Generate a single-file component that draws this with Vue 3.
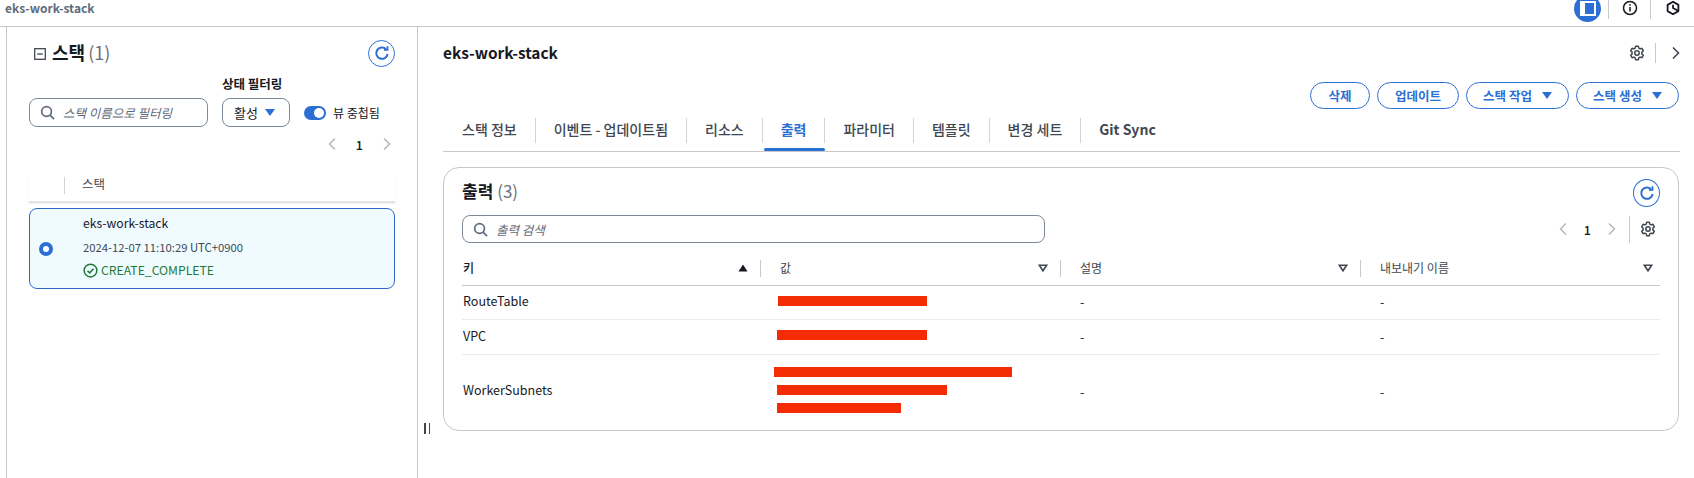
<script setup>
const tabs = ['스택 정보', '이벤트 - 업데이트됨', '리소스', '출력', '파라미터', '템플릿', '변경 세트', 'Git Sync']
const heads = [
  { name: '키', sort: 'up' },
  { name: '값', sort: 'down' },
  { name: '설명', sort: 'down' },
  { name: '내보내기 이름', sort: 'down' }
]
const rows = [
  { key: 'RouteTable', cls: 'short', bars: [{ w: 149, m: 18 }] },
  { key: 'VPC', cls: 'short2', bars: [{ w: 150, m: 17 }] },
  { key: 'WorkerSubnets', cls: 'tall', bars: [{ w: 238, m: 14 }, { w: 170, m: 17 }, { w: 124, m: 17 }] }
]
const gear = 'M6.6 1.3h2.8l.4 1.9 1.3.7 1.8-.6 1.4 2.4-1.4 1.4v1.8l1.4 1.4-1.4 2.4-1.8-.6-1.3.7-.4 1.9H6.6l-.4-1.9-1.3-.7-1.8.6-1.4-2.4 1.4-1.4V7.100L1.700 5.700l1.400-2.400 1.800.6 1.300-.7z'
</script>

<template>
  <div class="page">
    <header class="topbar">
      <span class="crumb">eks-work-stack</span>
      <div class="top-icons">
        <span class="panel-btn">
          <svg width="16" height="15" viewBox="0 0 16 15" fill="none"><rect x="1" y="1" width="14" height="13" stroke="#fff" stroke-width="2"/><rect x="2" y="2" width="3" height="11" fill="#fff"/></svg>
        </span>
        <span class="top-sep"></span>
        <span class="top-icon">
          <svg width="16" height="16" viewBox="0 0 16 16" fill="none" stroke="#16191f" stroke-width="1.5"><circle cx="8" cy="8" r="6.500"/><path d="M8 7v4.500"/><path d="M8 4.200v1.600" stroke-width="1.600"/></svg>
        </span>
        <span class="top-sep"></span>
        <span class="top-icon">
          <svg width="16" height="16" viewBox="0 0 16 16" fill="none" stroke="#16191f" stroke-width="1.800" stroke-linejoin="round"><path d="M8 1.800l5.400 3.100v6.200L8 14.200l-5.400-3.100V4.900z"/><path d="M8 4.800V8l5 2.800"/></svg>
        </span>
      </div>
    </header>

    <div class="main">
      <aside class="left">
        <div class="left-head">
          <div class="left-title">
            <svg width="12" height="12" viewBox="0 0 12 12" fill="none" stroke="#414750" stroke-width="1.3"><rect x=".7" y=".7" width="10.600" height="10.600"/><path d="M3.200 6h5.600"/></svg>
            <h2>스택<span class="count">(1)</span></h2>
          </div>
          <button class="refresh">
            <svg width="16" height="16" viewBox="0 0 16 16" fill="none" stroke="#2b6fd4" stroke-width="2"><path d="M13.600 9a5.700 5.700 0 1 1-1.700-5"/><path d="M13.500 1.200v3.600H9.900" stroke-width="1.800"/></svg>
          </button>
        </div>

        <div class="filters">
          <div class="search stack-search">
            <svg width="15" height="15" viewBox="0 0 16 16" fill="none" stroke="#5f6b7a" stroke-width="1.800"><circle cx="7" cy="7" r="5.200"/><path d="M11 11l4 4"/></svg>
            <span class="ph">스택 이름으로 필터링</span>
          </div>
          <div class="select-col">
            <label class="field-label">상태 필터링</label>
            <div class="select">
              <span>활성</span>
              <i class="caret"></i>
            </div>
          </div>
          <div class="toggle-wrap">
            <span class="toggle"><i></i></span>
            <span class="toggle-label">뷰 중첩됨</span>
          </div>
        </div>

        <div class="pager left-pager">
          <svg width="10" height="14" viewBox="0 0 10 14" fill="none" stroke="#b4b8bd" stroke-width="1.500"><path d="M8 1.500L2.500 7 8 12.500"/></svg>
          <span>1</span>
          <svg width="10" height="14" viewBox="0 0 10 14" fill="none" stroke="#b4b8bd" stroke-width="1.500"><path d="M2 1.500L7.500 7 2 12.500"/></svg>
        </div>

        <div class="list-head"><span class="list-head-cell">스택</span></div>

        <div class="stack-card">
          <span class="radio"></span>
          <div class="stack-info">
            <div class="stack-name">eks-work-stack</div>
            <div class="stack-date">2024-12-07 11:10:29 UTC+0900</div>
            <div class="stack-status">
              <svg width="15" height="15" viewBox="0 0 16 16" fill="none" stroke="#1f7a35" stroke-width="1.600"><circle cx="8" cy="8" r="6.800"/><path d="M4.800 8.200l2.300 2.300 4.200-4.400"/></svg>
              CREATE_COMPLETE
            </div>
          </div>
        </div>
      </aside>

      <section class="right">
        <span class="handle"><i></i><i></i></span>
        <div class="right-head">
          <h1>eks-work-stack</h1>
          <div class="right-tools">
            <svg width="16" height="16" viewBox="0 0 16 16" fill="none" stroke="#414750" stroke-width="1.500" stroke-linejoin="round"><path :d="gear"/><circle cx="8" cy="8" r="2.200"/></svg>
            <span class="tool-sep"></span>
            <svg width="10" height="14" viewBox="0 0 10 14" fill="none" stroke="#414750" stroke-width="1.600"><path d="M2 1.500L7.500 7 2 12.500"/></svg>
          </div>
        </div>

        <div class="actions">
          <button class="btn w-del">삭제</button>
          <button class="btn w-upd">업데이트</button>
          <button class="btn w-act">스택 작업 <i class="caret"></i></button>
          <button class="btn w-act">스택 생성 <i class="caret"></i></button>
        </div>

        <nav class="tabs">
          <div v-for="(t, i) in tabs" :key="t" class="tab" :class="{ active: t === '출력', last: i === tabs.length - 1 }">
            <span class="tab-label">{{ t }}</span>
            <span class="tab-bar"></span>
          </div>
        </nav>

        <div class="outputs">
          <div class="out-head">
            <h2>출력 <span class="count">(3)</span></h2>
            <button class="refresh refresh-big">
              <svg width="16" height="16" viewBox="0 0 16 16" fill="none" stroke="#2b6fd4" stroke-width="2"><path d="M13.600 9a5.700 5.700 0 1 1-1.700-5"/><path d="M13.500 1.200v3.600H9.900" stroke-width="1.800"/></svg>
            </button>
          </div>

          <div class="out-tools">
            <div class="search out-search">
              <svg width="15" height="15" viewBox="0 0 16 16" fill="none" stroke="#5f6b7a" stroke-width="1.800"><circle cx="7" cy="7" r="5.200"/><path d="M11 11l4 4"/></svg>
              <span class="ph">출력 검색</span>
            </div>
            <div class="out-right">
              <div class="pager">
                <svg width="10" height="14" viewBox="0 0 10 14" fill="none" stroke="#b4b8bd" stroke-width="1.500"><path d="M8 1.500L2.500 7 8 12.500"/></svg>
                <span>1</span>
                <svg width="10" height="14" viewBox="0 0 10 14" fill="none" stroke="#b4b8bd" stroke-width="1.500"><path d="M2 1.500L7.500 7 2 12.500"/></svg>
              </div>
              <span class="tool-sep tall-sep"></span>
              <svg class="out-gear" width="16" height="16" viewBox="0 0 16 16" fill="none" stroke="#414750" stroke-width="1.500" stroke-linejoin="round"><path :d="gear"/><circle cx="8" cy="8" r="2.200"/></svg>
            </div>
          </div>

          <div class="t-row t-head">
            <div v-for="(h, i) in heads" :key="h.name" class="th" :class="'th' + i">
              <span class="th-text">{{ h.name }}</span>
              <svg width="10" height="8" viewBox="0 0 10 8">
                <path v-if="h.sort === 'up'" d="M5 .5L9.500 7.500H.5z" fill="#16191f"/>
                <path v-else d="M1.300 1.200h7.400L5 6.800z" fill="none" stroke="#414750" stroke-width="1.600"/>
              </svg>
            </div>
          </div>

          <div v-for="r in rows" :key="r.key" class="t-row t-body" :class="r.cls">
            <div class="td key">{{ r.key }}</div>
            <div class="td bars">
              <span v-for="(b, i) in r.bars" :key="i" class="bar" :style="{ width: b.w + 'px', marginLeft: b.m + 'px' }"></span>
            </div>
            <div class="td dash">-</div>
            <div class="td dash">-</div>
          </div>
        </div>
      </section>
    </div>
  </div>
</template>

<style scoped>
.page {
  width: 1694px;
  height: 478px;
  overflow: hidden;
  background: #fff;
  color: #16191f;
  font-family: "Noto Sans CJK KR", "Noto Sans", sans-serif;
  display: flex;
  flex-direction: column;
}
h1, h2 { margin: 0; }
button { font-family: inherit; cursor: pointer; }

.topbar {
  height: 27px;
  box-sizing: border-box;
  border-bottom: 1px solid #c8c8c8;
  display: flex;
  justify-content: space-between;
  overflow: hidden;
  flex: none;
}
.crumb {
  margin: 0 0 0 5px;
  font-size: 12px;
  line-height: 16px;
  height: 18px;
  font-weight: 700;
  color: #5f6b7a;
}
.top-icons {
  display: flex;
  align-items: flex-start;
  margin-right: 13px;
}
.panel-btn {
  width: 27px;
  height: 27px;
  margin-top: -5px;
  border-radius: 50%;
  background: #2b6fd4;
  display: flex;
  align-items: center;
  justify-content: center;
  flex: none;
}
.top-sep {
  width: 1px;
  height: 19px;
  background: #c8c8c8;
  margin: 0 0 0 7px;
  flex: none;
}
.top-icon { display: flex; margin: 0 0 0 13px; }
.top-icon + .top-sep { margin-left: 12px; }
.top-icon:last-child { margin-left: 14px; }

.main { flex: 1; display: flex; min-height: 0; }

.left {
  margin-left: 6px;
  width: 412px;
  box-sizing: border-box;
  border-left: 1px solid #c8c8c8;
  border-right: 1px solid #c8c8c8;
  padding: 13px 22px 0 22px;
  flex: none;
}
.left-head {
  height: 28px;
  display: flex;
  align-items: center;
  justify-content: space-between;
}
.left-title {
  display: flex;
  align-items: center;
  gap: 6px;
  margin-left: 5px;
}
.left-title h2, .out-head h2 {
  font-size: 18px;
  line-height: 28px;
  font-weight: 700;
  color: #16191f;
  padding-bottom: 4px;
  height: 28px;
}
.left-title .count { margin-left: 3px; }
.count { font-weight: 400; color: #6b6f76; }
.refresh {
  width: 27px;
  height: 27px;
  padding: 0;
  background: #fff;
  border: 1px solid #2b6fd4;
  border-radius: 50%;
  display: flex;
  align-items: center;
  justify-content: center;
  flex: none;
}
.left-head .refresh { margin-bottom: 2px; }
.filters {
  display: flex;
  align-items: flex-end;
  margin-top: 7px;
}
.search {
  height: 29px;
  box-sizing: border-box;
  border: 1px solid #7d8998;
  border-radius: 8px;
  display: flex;
  align-items: center;
  gap: 8px;
  padding-left: 10px;
}
.stack-search { width: 179px; }
.ph {
  font-size: 12.5px;
  font-style: italic;
  color: #5f6b7a;
  white-space: nowrap;
}
.select-col {
  display: flex;
  flex-direction: column;
  margin-left: 14px;
}
.field-label {
  font-size: 12.5px;
  line-height: 18px;
  font-weight: 700;
  margin-bottom: 5px;
  white-space: nowrap;
}
.select {
  width: 68px;
  height: 29px;
  box-sizing: border-box;
  border: 1px solid #7d8998;
  border-radius: 8px;
  display: flex;
  align-items: center;
  justify-content: space-between;
  padding: 0 14px 0 11px;
  font-size: 13px;
}
.caret {
  display: inline-block;
  width: 0;
  height: 0;
  border-left: 5.500px solid transparent;
  border-right: 5.500px solid transparent;
  border-top: 7px solid #2b6fd4;
}
.toggle-wrap {
  display: flex;
  align-items: center;
  margin-left: 14px;
  height: 29px;
  gap: 7px;
}
.toggle {
  width: 22px;
  height: 14px;
  border-radius: 7px;
  background: #2b6fd4;
  display: flex;
  justify-content: flex-end;
  align-items: center;
  padding-right: 2px;
  box-sizing: border-box;
}
.toggle i {
  width: 10px;
  height: 10px;
  border-radius: 50%;
  background: #fff;
}
.toggle-label { font-size: 12px; white-space: nowrap; }
.pager {
  display: flex;
  align-items: center;
  gap: 16px;
  font-size: 12.500px;
  font-weight: 500;
  height: 18px;
}
.left-pager {
  margin-top: 8px;
  justify-content: flex-end;
  gap: 19px;
  padding-right: 3px;
}
.list-head {
  margin-top: 24px;
  height: 24px;
  border-bottom: 2px solid #e3e3e3;
  box-shadow: 0 1px 2px rgba(0, 0, 0, .06);
}
.list-head-cell {
  display: block;
  margin-left: 35px;
  height: 17px;
  border-left: 1px solid #d1d5db;
  padding-left: 17px;
  font-size: 12.5px;
  line-height: 14px;
  color: #414750;
}
.stack-card {
  margin-top: 5px;
  height: 81px;
  box-sizing: border-box;
  border: 1px solid #2f68c4;
  border-radius: 8px;
  background: #f0fbff;
  display: flex;
  align-items: center;
  padding-left: 9px;
}
.radio {
  width: 14px;
  height: 14px;
  box-sizing: border-box;
  border-radius: 50%;
  border: 4px solid #2b6fd4;
  background: #fff;
  flex: none;
}
.stack-info {
  margin-left: 30px;
  margin-bottom: 4px;
  display: flex;
  flex-direction: column;
}
.stack-name, .stack-date, .stack-status {
  height: 23.500px;
  display: flex;
  align-items: center;
  white-space: nowrap;
}
.stack-name { font-size: 12.2px; }
.stack-date { font-size: 11.3px; color: #414750; }
.stack-status { font-size: 12.2px; color: #1f7a35; gap: 3px; }

.right {
  position: relative;
  flex: 1;
  min-width: 0;
  padding: 13px 14px 0 25px;
}
.handle {
  position: absolute;
  left: 6px;
  top: 396px;
  display: flex;
  gap: 3px;
}
.handle i {
  width: 1.500px;
  height: 11px;
  background: #414750;
}
.right-head {
  height: 26px;
  display: flex;
  align-items: center;
  justify-content: space-between;
}
.right-head h1 { font-size: 15.4px; font-weight: 700; margin-bottom: 2px; }
.right-tools {
  display: flex;
  align-items: center;
  margin-right: -1px;
}
.tool-sep {
  width: 1px;
  height: 20px;
  background: #c8c8c8;
  margin: 0 15px 0 10px;
}
.actions {
  margin-top: 16px;
  display: flex;
  justify-content: flex-end;
  gap: 7px;
  padding-right: 1px;
}
.btn {
  height: 27px;
  box-sizing: border-box;
  border: 1px solid #2b6fd4;
  border-radius: 14px;
  background: #fff;
  color: #2b6fd4;
  font-size: 12.5px;
  font-weight: 700;
  display: flex;
  align-items: center;
  justify-content: center;
  gap: 10px;
  padding: 0;
}
.w-del { width: 60px; }
.w-upd { width: 82px; }
.w-act { width: 103px; }
.tabs {
  margin-top: 9px;
  display: flex;
  border-bottom: 1px solid #c8c8c8;
  height: 34px;
  box-sizing: border-box;
}
.tab { display: flex; flex-direction: column; }
.tab-label {
  height: 25px;
  box-sizing: border-box;
  border-right: 1px solid #d1d5db;
  padding: 0 18px;
  font-size: 14px;
  line-height: 22px;
  font-weight: 500;
  color: #414750;
  white-space: nowrap;
}
.tab:first-child .tab-label { padding-left: 19px; }
.tab.last .tab-label { border-right: 0; font-weight: 700; }
.tab-bar { height: 3px; margin-top: 5px; }
.tab.active .tab-label { color: #2b6fd4; font-weight: 700; }
.tab.active .tab-bar {
  background: #2b6fd4;
  border-radius: 2px;
  margin-left: 1px;
}
.outputs {
  margin-top: 15px;
  margin-right: 1px;
  height: 264px;
  box-sizing: border-box;
  border: 1px solid #c8c8c8;
  border-radius: 16px;
  padding: 11px 18px 0 18px;
}
.out-head {
  height: 28px;
  display: flex;
  align-items: center;
  justify-content: space-between;
}
.out-head h2 { font-size: 17px; }
.refresh-big { width: 27px; height: 28px; }
.out-tools {
  margin-top: 8px;
  display: flex;
  justify-content: space-between;
  align-items: center;
  height: 28px;
}
.out-search {
  width: 583px;
  height: 28px;
}
.out-right { display: flex; align-items: center; }
.tall-sep { height: 27px; margin: 0 10px 0 12px; }
.out-gear { margin-right: 4px; }
.t-row {
  display: grid;
  grid-template-columns: 298px 300px 300px 300px;
}
.t-head {
  margin-top: 13px;
  height: 30px;
  box-sizing: border-box;
  border-bottom: 1px solid #c8c8c8;
  padding-bottom: 5px;
  align-items: center;
  font-size: 12px;
  color: #414750;
}
.th {
  display: flex;
  align-items: center;
  justify-content: space-between;
  height: 17px;
  padding: 0 12px 0 19px;
  border-left: 1px solid #c8c8c8;
}
.th-text { margin-bottom: 2px; }
.th0 { border-left: 0; padding-left: 1px; color: #16191f; font-weight: 500; }
.th3 { padding-right: 7px; }
.t-body {
  font-size: 12.5px;
  align-items: center;
  border-bottom: 1px solid #e9ebed;
  box-sizing: border-box;
}
.t-body.short { height: 34px; }
.t-body.short2 { height: 35px; }
.t-body.tall { height: 75px; border-bottom: 0; }
.td.key { padding-left: 1px; color: #16191f; margin-bottom: 4px; }
.t-body.tall .td.key { margin-bottom: 6px; }
.td.dash { padding-left: 20px; margin-bottom: 2px; }
.td.bars {
  display: flex;
  flex-direction: column;
  gap: 8px;
  align-items: flex-start;
  margin-top: -4px;
}
.t-body.tall .td.bars { margin-top: -5px; }
.bar {
  display: block;
  height: 10px;
  background: #f42c04;
}
</style>

<style>
html, body { margin: 0; padding: 0; background: #fff; }
</style>
